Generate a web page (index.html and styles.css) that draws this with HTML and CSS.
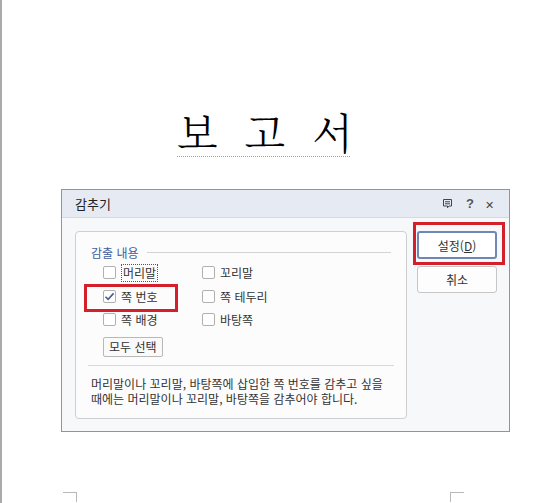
FILE: index.html
```html
<!DOCTYPE html>
<html lang="ko">
<head>
	<meta charset="UTF-8">
	<title>감추기</title>
	<link rel="stylesheet" href="styles.css">
</head>
<body>
	<div class="page">
		<div class="heading">
			<span class="heading-text">보 고 서</span>
		</div>

		<div class="dialog">
			<div class="titlebar">
				<span class="dialog-title">감추기</span>
				<div class="title-icons">
					<svg class="memo" width="11" height="11" viewBox="0 0 11 11">
						<path d="M1.5 1.5h8v6.5h-2.5l-1.5 1.8v-1.8h-4z" fill="none" stroke="#444" stroke-width="1"/>
						<path d="M3 3.8h5M3 5.8h5" stroke="#444" stroke-width="1"/>
					</svg>
					<span class="help">?</span>
					<span class="close">&#x2715;</span>
				</div>
			</div>

			<div class="dialog-body">
				<div class="group">
					<div class="legend">
						<span>감출 내용</span>
						<i class="legend-line"></i>
					</div>
					<div class="checks">
						<label class="check"><i class="box"></i><span class="focus">머리말</span></label>
						<label class="check"><i class="box"></i><span>꼬리말</span></label>
						<label class="check marked">
							<i class="box">
								<svg width="11" height="11" viewBox="0 0 11 11"><path d="M1.5 5.8l2.6 2.6 5.5-6" fill="none" stroke="#4b5d8f" stroke-width="1.6"/></svg>
							</i>
							<span>쪽 번호</span>
						</label>
						<label class="check"><i class="box"></i><span>쪽 테두리</span></label>
						<label class="check"><i class="box"></i><span>쪽 배경</span></label>
						<label class="check"><i class="box"></i><span>바탕쪽</span></label>
					</div>
					<button type="button" class="select-all">모두 선택</button>
					<div class="sep"></div>
					<p class="desc">머리말이나 꼬리말, 바탕쪽에 삽입한 쪽 번호를 감추고 싶을<br>때에는 머리말이나 꼬리말, 바탕쪽을 감추어야 합니다.</p>
				</div>

				<div class="actions">
					<button type="button" class="btn btn-primary">설정(<u>D</u>)</button>
					<button type="button" class="btn">취소</button>
				</div>
			</div>
		</div>

		<div class="marks">
			<i class="mark mark-left"></i>
			<i class="mark mark-right"></i>
		</div>
	</div>
</body>
</html>
```

FILE: styles.css
```css
*, *::before, *::after {
	box-sizing: border-box;
}
body {
	margin: 0;
	background: #fff;
	font-family: "Noto Sans CJK KR", "Noto Sans", sans-serif;
	font-size: 12px;
	color: #333;
}
.page {
	height: 503px;
	border-left: 2px solid #aaa;
	overflow: hidden;
}

/* 문서 제목 */
.heading {
	padding-top: 106px;
	padding-left: 175px;
	height: 189px;
}
.heading-text {
	display: inline-block;
	font-family: "Noto Serif CJK KR", "Noto Sans CJK KR", serif;
	font-weight: 300;
	font-size: 42px;
	line-height: 50px;
	letter-spacing: 7px;
	color: #000;
	width: 173px;
	white-space: nowrap;
	border-bottom: 1px dotted #e0993a;
}

/* 대화상자 */
.dialog {
	margin-left: 59px;
	width: 449px;
	height: 243px;
	border: 1px solid #8396b4;
	background: #f7f8fa;
	display: flex;
	flex-direction: column;
}
.titlebar {
	height: 28px;
	background: #e6ebf3;
	border-bottom: 1px solid #d3dae6;
	display: flex;
	align-items: center;
	padding: 0 15px 0 13px;
}
.dialog-title {
	font-size: 13px;
	color: #222;
	flex: 1;
}
.title-icons {
	display: flex;
	align-items: center;
	gap: 11px;
	color: #444;
}
.memo {
	margin-right: 2px;
}
.help {
	font-weight: bold;
	font-size: 13px;
	font-family: "Liberation Sans", sans-serif;
	color: #555;
}
.close {
	font-size: 11px;
	color: #444;
}

.dialog-body {
	flex: 1;
	display: flex;
	gap: 10px;
	padding: 13px 12px 12px 13px;
}

/* 감출 내용 묶음 */
.group {
	width: 332px;
	border: 1px solid #cfcfcf;
	border-radius: 4px;
	background: #fcfcfd;
	padding: 0 12px;
}
.legend {
	margin-top: 12px;
	height: 16px;
	display: flex;
	align-items: center;
	gap: 8px;
	padding-left: 3px;
	color: #3c5c9a;
	font-size: 12px;
}
.legend-line {
	flex: 1;
	border-top: 1px solid #d4d4d4;
	margin-right: 3px;
}
.checks {
	margin-top: 1px;
	margin-left: 15px;
	display: grid;
	grid-template-columns: 99px auto;
	grid-auto-rows: 23.5px;
}
.check {
	display: flex;
	align-items: center;
	gap: 5px;
	color: #333;
}
.box {
	width: 13px;
	height: 13px;
	border: 1px solid #b0b0b0;
	border-radius: 2px;
	background: #fff;
	display: flex;
	align-items: center;
	justify-content: center;
}
.focus {
	border: 1px dotted #555;
	padding: 0 1px;
	line-height: 16px;
}
.marked {
	position: relative;
}
.marked::after {
	content: "";
	position: absolute;
	left: -19px;
	top: -1px;
	width: 94px;
	height: 28px;
	border: 3px solid #d3202b;
}
.select-all {
	margin: 5px 0 0 15px;
	height: 20px;
	padding: 0 5px;
	font-family: inherit;
	font-size: 12px;
	color: #333;
	background: #fafafa;
	border: 1px solid #b8b8b8;
	border-radius: 2px;
}
.sep {
	margin-top: 8px;
	border-top: 1px solid #d8d8d8;
}
.desc {
	margin: 10px 0 0;
	padding-left: 3px;
	line-height: 15px;
	color: #333;
	white-space: nowrap;
}

/* 오른쪽 버튼 */
.actions {
	width: 80px;
	display: flex;
	flex-direction: column;
	gap: 7px;
}
.btn {
	height: 27px;
	font-family: inherit;
	font-size: 12px;
	color: #333;
	background: #fdfdfd;
	border: 1px solid #c6c6c6;
	border-radius: 3px;
}
.btn-primary {
	height: 28px;
	border: 2px solid #6f86b6;
	background: #fff;
	position: relative;
}
.btn-primary::after {
	content: "";
	position: absolute;
	left: -6px;
	top: -11px;
	width: 92px;
	height: 43px;
	border: 3px solid #d3202b;
}

/* 편집 용지 모서리 표시 */
.marks {
	margin-top: 60px;
	position: relative;
	height: 10px;
}
.mark {
	position: absolute;
	top: 0;
	width: 14px;
	height: 10px;
	border-top: 1px solid #b8b8b8;
}
.mark-left {
	left: 61px;
	border-right: 1px solid #b8b8b8;
}
.mark-right {
	left: 448px;
	border-left: 1px solid #b8b8b8;
}
```
